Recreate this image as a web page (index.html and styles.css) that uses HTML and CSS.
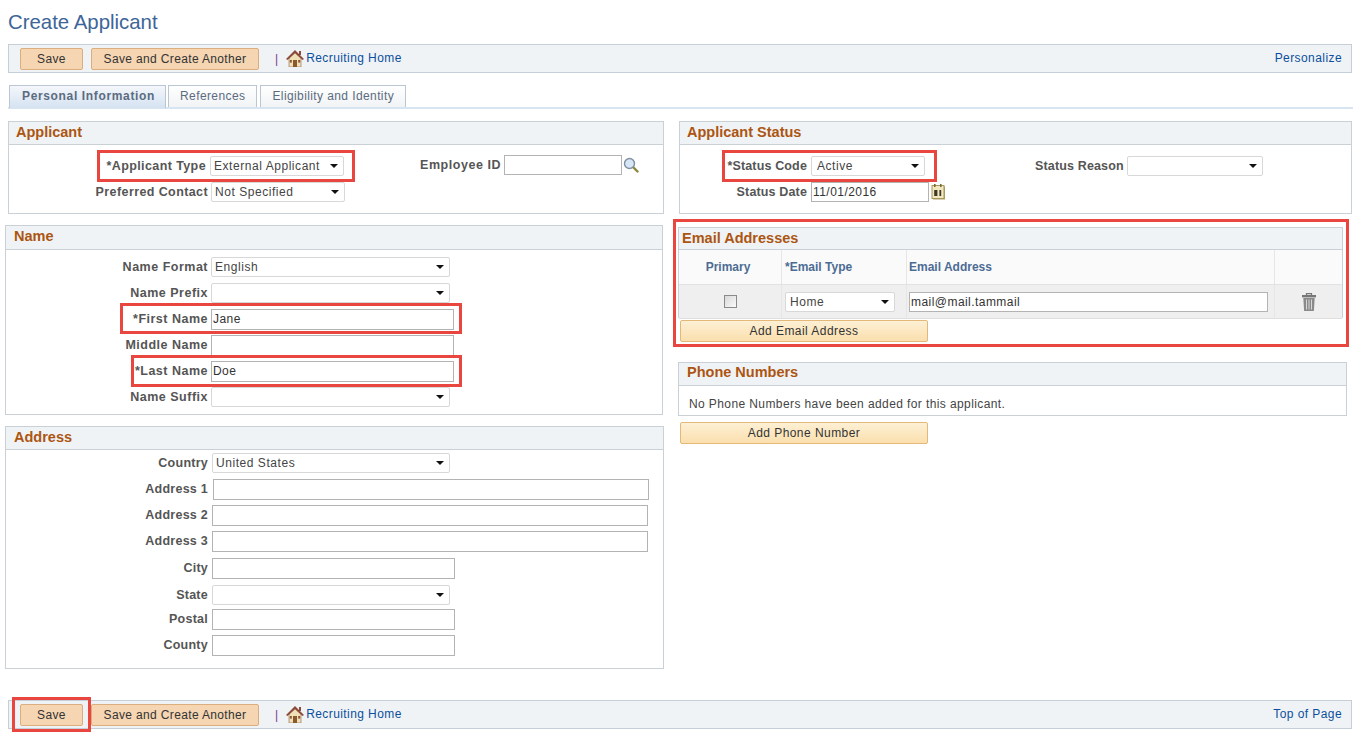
FILE: index.html
```html
<!DOCTYPE html>
<html lang="en">
<head>
    <meta charset="UTF-8">
    <title>Create Applicant</title>
    <link rel="stylesheet" href="styles.css">
</head>
<body>
    <svg class="defs" width="0" height="0">
        <symbol id="home" viewBox="0 0 18 17">
            <path d="M3 8v9h12V8L9 3z" fill="#f0e0b8" stroke="#8a6a48" stroke-width=".6"/>
            <path d="M0 9 9 0l9 9-1.6 1L9 3 1.6 10z" fill="#8c4a38"/>
            <rect x="13" y="1" width="2" height="4" fill="#8c4a38"/>
            <rect x="7" y="10" width="4" height="7" fill="#8a5a2c"/>
            <rect x="3.8" y="10" width="2" height="2.6" fill="#8a5a2c"/>
            <rect x="12.2" y="10" width="2" height="2.6" fill="#8a5a2c"/>
        </symbol>
    </svg>

    <div class="page">
        <h1>Create Applicant</h1>

        <div class="toolbar">
            <button class="btn">Save</button>
            <button class="btn btn-wide">Save and Create Another</button>
            <span class="pipe">|</span>
            <svg class="home-icon"><use href="#home"/></svg>
            <a class="link" href="#">Recruiting Home</a>
            <a class="link right" href="#">Personalize</a>
        </div>

        <div class="tabs">
            <a class="tab active">Personal Information</a>
            <a class="tab">References</a>
            <a class="tab">Eligibility and Identity</a>
        </div>

        <div class="columns">
            <div class="col-left">
                <!-- Applicant -->
                <section class="panel panel-applicant">
                    <h2>Applicant</h2>
                    <div class="applicant-body">
                        <div>
                            <div class="row">
                                <span class="mark mark-type"></span>
                                <label class="w-type-req">*Applicant Type</label>
                                <div class="sel sel-134"><select><option>External Applicant</option></select></div>
                            </div>
                            <div class="row">
                                <label class="w-type">Preferred Contact</label>
                                <div class="sel sel-134"><select><option>Not Specified</option></select></div>
                            </div>
                        </div>
                        <div class="row employee">
                            <label>Employee ID</label>
                            <input class="inp inp-id" type="text">
                            <svg class="search" width="16" height="16" viewBox="0 0 16 16">
                                <path d="M10 10l4.500 4.500" stroke="#8a8a3c" stroke-width="2.400" stroke-linecap="round"/>
                                <circle cx="6.500" cy="6.500" r="5" fill="#d6e6f6" stroke="#7f8f9f" stroke-width="1.400"/>
                            </svg>
                        </div>
                    </div>
                </section>

                <!-- Name -->
                <section class="panel panel-name">
                    <h2>Name</h2>
                    <div class="form-body">
                        <div class="row"><label>Name Format</label><div class="sel sel-239"><select><option>English</option></select></div></div>
                        <div class="row"><label>Name Prefix</label><div class="sel sel-239"><select><option></option></select></div></div>
                        <div class="row"><span class="mark mark-first"></span><label>*First Name</label><input class="inp inp-243" type="text" value="Jane"></div>
                        <div class="row"><label>Middle Name</label><input class="inp inp-243" type="text"></div>
                        <div class="row"><span class="mark mark-last"></span><label>*Last Name</label><input class="inp inp-243" type="text" value="Doe"></div>
                        <div class="row"><label>Name Suffix</label><div class="sel sel-239"><select><option></option></select></div></div>
                    </div>
                </section>

                <!-- Address -->
                <section class="panel panel-address">
                    <h2>Address</h2>
                    <div class="form-body">
                        <div class="row"><label>Country</label><div class="sel sel-238"><select><option>United States</option></select></div></div>
                        <div class="row"><label>Address 1</label><input class="inp inp-436 inp-first" type="text"></div>
                        <div class="row"><label>Address 2</label><input class="inp inp-436" type="text"></div>
                        <div class="row"><label>Address 3</label><input class="inp inp-436" type="text"></div>
                        <div class="row row-city"><label>City</label><input class="inp inp-243" type="text"></div>
                        <div class="row row-state"><label>State</label><div class="sel sel-238"><select><option></option></select></div></div>
                        <div class="row row-postal"><label>Postal</label><input class="inp inp-243" type="text"></div>
                        <div class="row"><label>County</label><input class="inp inp-243" type="text"></div>
                    </div>
                </section>
            </div>

            <div class="col-right">
                <!-- Applicant Status -->
                <section class="panel panel-status">
                    <h2>Applicant Status</h2>
                    <div class="status-body">
                        <div>
                            <div class="row">
                                <span class="mark mark-status"></span>
                                <label class="w-status">*Status Code</label>
                                <div class="sel sel-114"><select><option>Active</option></select></div>
                            </div>
                            <div class="row">
                                <label class="w-status">Status Date</label>
                                <input class="inp inp-date" type="text" value="11/01/2016">
                                <svg class="cal" width="14" height="16" viewBox="0 0 14 16">
                                    <rect x="2" y="2.500" width="12" height="13" fill="#b0a068"/>
                                    <rect x="1" y="1.500" width="12" height="13" fill="#f2e8c0" stroke="#a8965a"/>
                                    <rect x="3" y="0" width="1.600" height="3" fill="#7a6a3a"/>
                                    <rect x="9" y="0" width="1.600" height="3" fill="#7a6a3a"/>
                                    <rect x="3.200" y="6" width="3.200" height="6" fill="#3f3a28"/>
                                    <rect x="8.400" y="6" width="1.800" height="6" fill="#3f3a28"/>
                                </svg>
                            </div>
                        </div>
                        <div class="row reason">
                            <label>Status Reason</label>
                            <div class="sel sel-136"><select><option></option></select></div>
                        </div>
                    </div>
                </section>

                <!-- Email Addresses -->
                <div class="email-mark">
                    <section class="panel panel-email">
                        <h2>Email Addresses</h2>
                        <div class="grid-head">
                            <div class="c-primary">Primary</div>
                            <div class="c-type">*Email Type</div>
                            <div class="c-addr">Email Address</div>
                            <div class="c-del"></div>
                        </div>
                        <div class="grid-row">
                            <div class="c-primary"><span class="checkbox"></span></div>
                            <div class="c-type"><div class="sel sel-110"><select><option>Home</option></select></div></div>
                            <div class="c-addr"><input class="inp inp-email" type="text" value="mail@mail.tammail"></div>
                            <div class="c-del">
                                <svg width="16" height="18" viewBox="0 0 16 18">
                                    <path d="M5.500 2V.7h5V2" fill="none" stroke="#777" stroke-width="1.200"/>
                                    <rect x="1" y="2" width="14" height="2.400" fill="#777"/>
                                    <path d="M2.300 5h11.400l-.8 13H3.100z" fill="#8a8a8a"/>
                                    <path d="M5.500 6.500v10M8 6.500v10M10.500 6.500v10" stroke="#d8d8d8" stroke-width="1"/>
                                </svg>
                            </div>
                        </div>
                    </section>
                    <button class="btn-add">Add Email Address</button>
                </div>

                <!-- Phone Numbers -->
                <section class="panel panel-phone">
                    <h2>Phone Numbers</h2>
                    <p>No Phone Numbers have been added for this applicant.</p>
                </section>
                <button class="btn-add btn-phone">Add Phone Number</button>
            </div>
        </div>

        <div class="toolbar toolbar-bottom">
            <span class="mark mark-save"></span>
            <button class="btn">Save</button>
            <button class="btn btn-wide">Save and Create Another</button>
            <span class="pipe">|</span>
            <svg class="home-icon"><use href="#home"/></svg>
            <a class="link" href="#">Recruiting Home</a>
            <a class="link right" href="#">Top of Page</a>
        </div>
    </div>
</body>
</html>
```

FILE: styles.css
```css
/* Base */
body {
    margin: 0;
    background: #fff;
    font-family: "Liberation Sans", Arial, sans-serif;
    font-size: 12px;
    color: #333;
    overflow: hidden;
}

.defs { position: absolute; }

.page {
    width: 1367px;
    height: 738px;
    box-sizing: border-box;
    padding-top: 11px;
}

h1 {
    margin: 0 0 10px 8px;
    height: 23px;
    font-size: 20.400px;
    line-height: 23px;
    font-weight: normal;
    color: #3d6598;
}

/* Toolbars */
.toolbar {
    position: relative;
    display: flex;
    align-items: center;
    width: 1344px;
    height: 29px;
    box-sizing: border-box;
    margin-left: 8px;
    padding-left: 11px;
    background: #f0f3f5;
    border: 1px solid #c6cfd8;
}

.toolbar-bottom {
    position: relative;
    margin-top: 19px;
}

.btn {
    width: 63px;
    height: 22px;
    padding: 0;
    margin-right: 8px;
    background: #f5d5b2;
    border: 1px solid #dcae7e;
    border-radius: 2px;
    font: 12px "Liberation Sans", Arial, sans-serif;
    letter-spacing: .35px;
    color: #333;
}

.btn-wide { width: 168px; }

.pipe {
    margin: 0 8px 0 8px;
    color: #7a3a8c;
}

.home-icon {
    width: 18px;
    height: 17px;
    margin-right: 2px;
}

.link {
    color: #0b4f9e;
    text-decoration: none;
    letter-spacing: .42px;
    margin-top: -2px;
}

.right {
    margin-left: auto;
    margin-right: 9px;
}

/* Tabs */
.tabs {
    display: flex;
    gap: 3px;
    width: 1345px;
    height: 24px;
    box-sizing: border-box;
    margin: 12px 0 0 8px;
    padding-left: 1px;
    border-bottom: 2px solid #d7e4f2;
}

.tab {
    height: 22px;
    line-height: 21px;
    box-sizing: border-box;
    padding: 0 11px;
    border: 1px solid #bcc6d2;
    border-bottom: 0;
    background: linear-gradient(#fff, #f1f3f5);
    color: #5b6b80;
    letter-spacing: .4px;
}

.tab.active {
    height: 23px;
    margin-right: -1px;
    padding: 0 10px 0 12px;
    background: linear-gradient(#f4f7fb, #d5e2f1);
    font-weight: bold;
    letter-spacing: .65px;
}

/* Columns */
.columns {
    display: flex;
    height: 560px;
    margin-top: 12px;
}

.col-left { width: 669px; }

.col-right { width: 690px; }

/* Panels */
.panel {
    box-sizing: border-box;
    border: 1px solid #c9d0d6;
}

.panel h2 {
    margin: 0;
    height: 23px;
    box-sizing: border-box;
    padding-left: 7px;
    line-height: 21px;
    font-size: 14.500px;
    font-weight: bold;
    color: #ac5512;
    background: #f0f3f5;
    border-bottom: 1px solid #c9d0d6;
}

.panel-applicant {
    width: 656px;
    height: 93px;
    margin-left: 8px;
}

.applicant-body {
    display: flex;
    padding-top: 8px;
}

.panel-name {
    width: 658px;
    height: 190px;
    margin: 11px 0 0 5px;
    border-top: 0;
}

.panel-address {
    width: 659px;
    height: 243px;
    margin: 11px 0 0 5px;
}

.panel-name .form-body { padding-top: 4px; }

.panel-name h2 {
    height: 25px;
    padding-left: 8px;
    border-top: 1px solid #c9d0d6;
    line-height: 21px;
}

.panel-address h2 { padding-left: 8px; }

/* Form rows */
.row {
    position: relative;
    display: flex;
    align-items: center;
    height: 26px;
}

.row-city { margin-top: 1px; }

.row-state { margin-top: 1px; }

.row-postal { margin-top: -2px; }

label {
    width: 202px;
    margin-right: 3px;
    text-align: right;
    font-weight: bold;
    font-size: 12.500px;
    letter-spacing: .5px;
    color: #555;
    flex: none;
}

.panel-address label {
    margin-right: 4px;
    letter-spacing: .25px;
}

.w-type { width: 199px; letter-spacing: .4px; }

.w-type-req { width: 197px; margin-right: 4px; letter-spacing: .4px; }

.w-status { width: 127px; margin-right: 4px; letter-spacing: .15px; }

.employee {
    height: 20px;
    margin: 2px 0 0 75px;
}

.employee label {
    width: auto;
    margin-right: 3px;
    letter-spacing: .55px;
}

.reason {
    height: 20px;
    margin: 3px 0 0 90px;
}

.reason label {
    width: auto;
    margin-right: 3px;
    letter-spacing: .15px;
}

.inp {
    height: 21px;
    box-sizing: border-box;
    padding: 0 1px;
    border: 1px solid #b3b3b3;
    background: #fff;
    font: 12px "Liberation Sans", Arial, sans-serif;
    color: #333;
    letter-spacing: .45px;
    outline: 0;
}

.inp-243 { width: 243px; }

.inp-436 { width: 436px; }

.inp-first { margin-left: 1px; }

.inp-id { width: 118px; height: 20px; }

.inp-date { width: 118px; height: 20px; }

.inp-email { width: 359px; height: 20px; }

.search { margin-left: 1px; }

.cal { margin-left: 2px; }

/* Select boxes */
.sel {
    position: relative;
    height: 20px;
    flex: none;
}

.sel::after {
    content: "";
    position: absolute;
    right: 6px;
    top: 8px;
    border: 4px solid transparent;
    border-top: 4px solid #111;
    border-bottom: 0;
}

.sel select {
    appearance: none;
    display: block;
    width: 100%;
    height: 100%;
    padding: 0 0 0 3px;
    background: #fff;
    border: 1px solid #d8d8d8;
    border-radius: 2px;
    font: 12px "Liberation Sans", Arial, sans-serif;
    letter-spacing: .55px;
    color: #444;
}

.sel-134 { width: 134px; }

.sel-239 { width: 239px; }

.sel-238 { width: 238px; }

.sel-114 { width: 114px; }

.sel-114 select { padding-left: 5px; }

.sel-136 { width: 136px; }

.sel-110 { width: 110px; }

.sel-110 select { padding-left: 4px; }

/* Red highlights */
.mark {
    position: absolute;
    box-sizing: border-box;
    border: 3px solid #ea4640;
    pointer-events: none;
}

.mark-type { left: 88px; top: -3px; width: 258px; height: 32px; }

.mark-first { left: 114px; top: -3px; width: 342px; height: 31px; }

.mark-last { left: 125px; top: -3px; width: 331px; height: 32px; }

.mark-status { left: 42px; top: -3px; width: 215px; height: 32px; }

.mark-save { left: 3px; top: -4px; width: 79px; height: 35px; }

/* Right column */
.panel-status {
    width: 673px;
    height: 93px;
    margin-left: 10px;
}

.status-body {
    display: flex;
    padding-top: 8px;
}

.email-mark {
    width: 676px;
    height: 128px;
    box-sizing: border-box;
    margin: 5px 0 0 4px;
    padding: 5px 0 0 2px;
    border: 3px solid #ea4640;
}

.panel-email {
    width: 665px;
    height: 91px;
    border-bottom: 0;
}

.panel-email h2 { height: 22px; padding-left: 3px; }

.grid-head,
.grid-row { display: flex; }

.grid-head {
    height: 34px;
    line-height: 34px;
    font-weight: bold;
    background: #fafafa;
    color: #4c6c94;
    border-bottom: 1px solid #e2e2e2;
}

.grid-row {
    height: 33px;
    align-items: center;
    background: #efefef;
    border-bottom: 1px solid #dedede;
}

.grid-head > div,
.grid-row > div { height: 100%; box-sizing: border-box; }

.c-primary {
    width: 103px;
    padding-right: 4px;
    text-align: center;
    border-right: 1px solid #e6e6e6;
}

.grid-row .c-primary { padding-right: 0; }

.c-type {
    width: 125px;
    padding-left: 3px;
    border-right: 1px solid #e6e6e6;
}

.c-addr {
    width: 368px;
    padding-left: 2px;
    border-right: 1px solid #e6e6e6;
}

.c-del { flex: 1; text-align: center; }

.grid-row .c-primary,
.grid-row .c-type,
.grid-row .c-addr,
.grid-row .c-del {
    display: flex;
    align-items: center;
}

.grid-row .c-primary,
.grid-row .c-del { justify-content: center; }

.checkbox {
    width: 11px;
    height: 11px;
    border: 1px solid #8a8a8a;
    background: linear-gradient(135deg, #d8d8d8, #fafafa);
}

.btn-add {
    display: block;
    width: 248px;
    height: 22px;
    margin: 2px 0 0 2px;
    padding: 0;
    background: linear-gradient(#fdf0d4, #fbdfae);
    border: 1px solid #e3b878;
    border-radius: 2px;
    font: 12px "Liberation Sans", Arial, sans-serif;
    letter-spacing: .45px;
    color: #333;
}

.panel-phone {
    width: 669px;
    height: 54px;
    margin: 15px 0 0 9px;
}

.panel-phone h2 { padding-left: 8px; line-height: 19px; }

.panel-phone p {
    margin: 0;
    padding: 11px 0 0 10px;
    letter-spacing: .4px;
    color: #444;
}

.btn-phone { margin: 6px 0 0 11px; }
```
